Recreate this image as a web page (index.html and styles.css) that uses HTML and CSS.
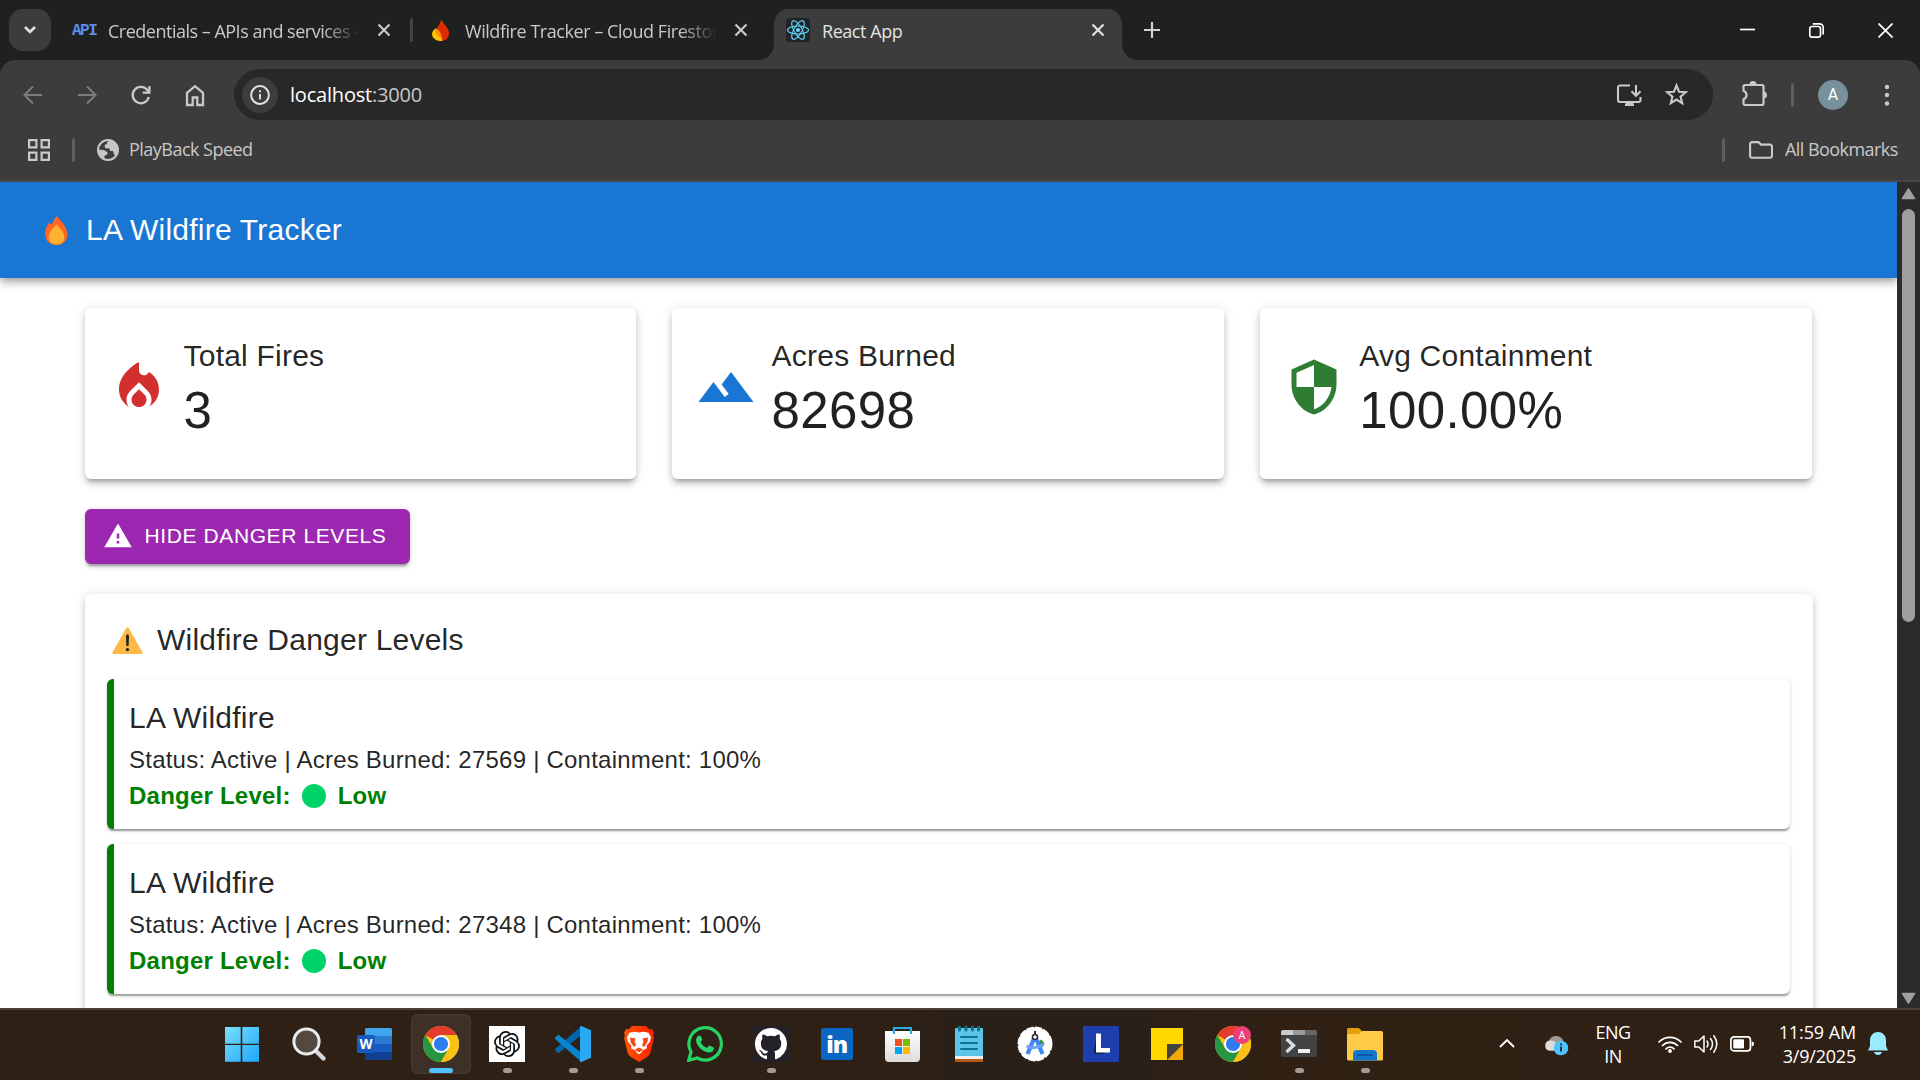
FILE: index.html
```html
<!DOCTYPE html>
<html lang="en">
<head>
<meta charset="utf-8">
<title>React App</title>
<link rel="stylesheet" href="styles.css">
</head>
<body>
<div class="screen">

<header class="tabstrip">
  <button class="tab-search" aria-label="Search tabs"><svg width="14" height="10" viewBox="0 0 14 10"><path d="M2 2l5 5 5-5" fill="none" stroke="#e3e3e3" stroke-width="2.6"/></svg></button>
  <div class="tab tab-first">
    <span class="favicon api">API</span>
    <span class="tab-title t1">Credentials – APIs and services -</span>
    <svg class="close" viewBox="0 0 14 14"><path d="M1.5 1.5l11 11m0-11l-11 11"/></svg>
  </div>
  <i class="tab-sep"></i>
  <div class="tab tab-second">
    <svg class="favicon" viewBox="0 0 24 24"><path d="M12.500 1C13.500 6 20 9 20 15.500c0 4.500-3.500 7.500-7.500 7.500S5.500 20 5.500 15.500C5.500 12 11 7 12.500 1z" fill="#dd2c00"/><path d="M6.500 10.500c4 1.500 6 6 6.600 12.400C7 23.500 3 20 3 16c0-2.500 2-4.500 3.500-5.500z" fill="#ffc400"/><path d="M6.500 10.500c3.600 1.300 5.500 4.600 6.300 9.500C8 19 5.500 15 6.500 10.500z" fill="#ff9100"/></svg>
    <span class="tab-title t2">Wildfire Tracker – Cloud Firestor</span>
    <svg class="close" viewBox="0 0 14 14"><path d="M1.500 1.500l11 11m0-11l-11 11"/></svg>
  </div>
  <div class="tab tab-active">
    <svg class="favicon" viewBox="0 0 24 24"><rect width="24" height="24" rx="3" fill="#20232a"/><g fill="none" stroke="#61dafb" stroke-width="1.100"><ellipse cx="12" cy="12" rx="10.500" ry="4"/><ellipse cx="12" cy="12" rx="10.500" ry="4" transform="rotate(60 12 12)"/><ellipse cx="12" cy="12" rx="10.500" ry="4" transform="rotate(120 12 12)"/></g><circle cx="12" cy="12" r="2" fill="#61dafb"/></svg>
    <span class="tab-title t3">React App</span>
    <svg class="close bright" viewBox="0 0 14 14"><path d="M1.500 1.500l11 11m0-11l-11 11"/></svg>
  </div>
  <svg class="plus" viewBox="0 0 16 16"><path d="M8 0v16M0 8h16" stroke="#d0d0d0" stroke-width="2.200"/></svg>
  <div class="win-controls">
    <svg viewBox="0 0 15 15"><path d="M0 6.500h15" /></svg>
    <svg viewBox="0 0 15 15"><rect x=".8" y="3.500" width="10.700" height="10.700" rx="2.200"/><path d="M3.800 .8h6.700a3.700 3.700 0 0 1 3.700 3.700v7"/></svg>
    <svg viewBox="0 0 15 15"><path d="M.5 .5l14 14m0-14l-14 14"/></svg>
  </div>
</header>

<div class="toolbar">
  <div class="nav-row">
    <svg class="nav" viewBox="0 0 24 24"><g fill="none" stroke="#7d7d7d" stroke-width="2"><path d="M21 12H4.500M12 3.500L3.500 12l8.500 8.500"/></g></svg>
    <svg class="nav" viewBox="0 0 24 24"><g fill="none" stroke="#7d7d7d" stroke-width="2"><path d="M3 12h16.500M12 3.500l8.500 8.500-8.500 8.500"/></g></svg>
    <svg class="nav" viewBox="0 0 24 24"><g fill="none" stroke="#c9c9c9" stroke-width="2.300"><path d="M19.800 14A8.200 8.200 0 1 1 18.500 7.200l1.300 1.800"/><path d="M20.400 3v6.700h-6.700"/></g></svg>
    <svg class="nav" viewBox="0 0 24 24"><path d="M4 9.800l8-6.600 8 6.600V22h-5.700v-7.500H9.700V22H4z" fill="none" stroke="#c9c9c9" stroke-width="2.300"/></svg>
    <div class="omnibox">
      <span class="site-info"><svg viewBox="0 0 20 20"><circle cx="10" cy="10" r="8.900" fill="none" stroke="#e3e3e3" stroke-width="2"/><path d="M10 9v5.500M10 5.300v2" stroke="#e3e3e3" stroke-width="1.900"/></svg></span>
      <span class="url">localhost<em>:3000</em></span>
      <svg class="install" viewBox="0 0 26 24" fill="none" stroke="#c9c9c9" stroke-width="2.100"><path d="M14 2.500H4A2 2 0 0 0 2 4.500v12.500a2 2 0 0 0 2 2h19a2 2 0 0 0 1.500-2v-3M9 22h9"/><path d="M9.500 19v3.500h8V19" fill="#c9c9c9" stroke="none"/><path d="M20 2v10.500M15.500 8.300l4.500 4.500 4.500-4.500"/></svg>
      <svg class="star" viewBox="0 0 24 24"><path d="M12 3.200l2.400 6.100 6.500.5-5 4.200 1.600 6.400-5.500-3.500-5.500 3.500 1.600-6.400-5-4.200 6.500-.5z" fill="none" stroke="#c9c9c9" stroke-width="2"/></svg>
    </div>
    <svg class="ext" viewBox="0 0 26 26"><path d="M4 5h17a1.500 1.500 0 0 1 1.500 1.500v17A1.500 1.500 0 0 1 21 25H4a1.500 1.500 0 0 1-1.500-1.500v-4.200c4-1.500 4-7.100 0-8.600V6.500A1.500 1.500 0 0 1 4 5z" fill="none" stroke="#c9c9c9" stroke-width="2.200"/><path d="M8.500 4.500a3.500 3.500 0 0 1 7 0zM22.500 11.500a3.500 3.500 0 0 1 0 7z" fill="#c9c9c9"/></svg>
    <i class="vsep vsep-nav"></i>
    <span class="avatar">A</span>
    <svg class="dots" viewBox="0 0 6 24"><circle cx="3" cy="4" r="2.200"/><circle cx="3" cy="12" r="2.200"/><circle cx="3" cy="20.500" r="2.200"/></svg>
  </div>
  <div class="bookmarks">
    <svg class="apps" viewBox="0 0 22 22"><g fill="none" stroke="#c9c9c9" stroke-width="2.200"><path d="M1.100 1.100h7.300v7.300H1.100zM13.600 1.100h7.300v7.300h-7.300zM1.100 13.600h7.300v7.300H1.100zM13.600 13.600h7.300v7.300h-7.300z"/></g></svg>
    <i class="vsep vsep-apps"></i>
    <svg class="globe" viewBox="0 0 22 22"><circle cx="11" cy="11" r="10" fill="#3c3c3c" stroke="#c4c7c5" stroke-width="2"/><path d="M13 1.500c-2.500.8-3.500 2-3 3.500L7.500 6l.7 3.200 4.300.3.500 2.500h3l1 3.500 1.800 2C22 13.500 22.500 5.500 13 1.500zM1 10.500l5.500.4 4 2.200-.4 2.600-2.600 1-.3 3.500C3 18.500 1 14.500 1 10.500z" fill="#c4c7c5"/></svg>
    <span class="bm-text">PlayBack Speed</span>
    <i class="vsep vsep-all"></i>
    <svg class="folder" viewBox="0 0 24 18"><path d="M1.100 3V14.800a2 2 0 0 0 2 2H21a2 2 0 0 0 2-2V5.600a2 2 0 0 0-2-2h-9l-2.500-2.500H3.100a2 2 0 0 0-2 2z" fill="none" stroke="#c9c9c9" stroke-width="2.100"/></svg>
    <span class="bm-all">All Bookmarks</span>
  </div>
</div>

<div class="viewport">
  <main class="page">
    <div class="appbar">
      <svg class="emoji" viewBox="0 0 41 34"><path d="M21 3c2 3.500 9.500 8.500 10.300 17.500C31.800 28 27 32 20.500 32S9.200 28 9.200 20.500c0-4.500 1.800-8 4.300-11.300.6 1 1.400 2 2.500 2.800C16.500 8.500 18.500 5.500 21 3z" fill="#ff6723"/><path d="M20.500 11.500c2.500 3 7.800 7 7.800 12.700 0 4.800-3.400 7.300-7.800 7.300s-7.800-2.500-7.800-7.300c0-5.700 5.300-9.700 7.800-12.700z" fill="#ffb02e"/></svg>
      <h1>LA Wildfire Tracker</h1>
    </div>
    <div class="container">
      <section class="stats">
        <article class="card stat">
          <svg class="stat-icon fire" viewBox="0 0 24 24"><path d="m12 12.900-2.130 2.090c-.56.56-.87 1.290-.87 2.070C9 18.680 10.350 20 12 20s3-1.320 3-2.940c0-.78-.31-1.520-.87-2.070z"/><path d="m16 6-.44.55C14.380 8.020 12 7.190 12 5.300V2S4 6 4 13c0 2.920 1.560 5.470 3.890 6.860-.56-.79-.89-1.760-.89-2.800 0-1.320.52-2.560 1.470-3.500L12 10.100l3.530 3.470c.95.93 1.470 2.170 1.470 3.500 0 1.020-.31 1.960-.85 2.750 1.890-1.150 3.290-3.060 3.710-5.300.66-3.550-1.070-6.900-3.860-8.520"/></svg>
          <div><h2>Total Fires</h2><p>3</p></div>
        </article>
        <article class="card stat">
          <svg class="stat-icon land" viewBox="0 0 24 24"><path d="m14 6-3.750 5 2.850 3.800-1.600 1.200C9.810 13.750 7 10 7 10l-6 8h22z"/></svg>
          <div><h2>Acres Burned</h2><p>82698</p></div>
        </article>
        <article class="card stat">
          <svg class="stat-icon shield" viewBox="0 0 24 24"><path d="M12 1 3 5v6c0 5.550 3.840 10.740 9 12 5.160-1.260 9-6.450 9-12V5zm0 10.990h7c-.53 4.120-3.280 7.790-7 8.940V12H5V6.300l7-3.110z"/></svg>
          <div><h2>Avg Containment</h2><p>100.00%</p></div>
        </article>
      </section>
      <button class="hide-btn"><svg viewBox="0 0 24 24"><path d="M1 21h22L12 2zm12-3h-2v-2h2zm0-4h-2v-4h2z"/></svg>Hide Danger Levels</button>
      <section class="card danger">
        <div class="danger-title">
          <svg class="emoji" viewBox="0 0 41 34"><path d="M19 5.500q1.500-2.600 3 0L35.300 29q1 2-1.300 2H7q-2.300 0-1.300-2z" fill="#ffb848"/><path d="M19 13.500q0-2.200 1.500-2.200t1.500 2.200l-.4 9.500h-2.200z" fill="#222"/><circle cx="20.500" cy="26.600" r="1.700" fill="#222"/></svg>
          <h2>Wildfire Danger Levels</h2>
        </div>
        <article class="fire-row">
          <h3>LA Wildfire</h3>
          <p>Status: Active | Acres Burned: 27569 | Containment: 100%</p>
          <p class="level">Danger Level: <i class="circle"></i> Low</p>
        </article>
        <article class="fire-row">
          <h3>LA Wildfire</h3>
          <p>Status: Active | Acres Burned: 27348 | Containment: 100%</p>
          <p class="level">Danger Level: <i class="circle"></i> Low</p>
        </article>
      </section>
    </div>
  </main>
  <div class="scrollbar">
    <svg viewBox="0 0 15 12"><path d="M7.500 1l6 9.500h-12z"/></svg>
    <i class="thumb"></i>
    <svg viewBox="0 0 15 12"><path d="M7.500 11l6-9.500h-12z"/></svg>
  </div>
</div>

<footer class="taskbar">
  <div class="apps-row">
    <span class="app"><svg viewBox="0 0 36 36"><defs><linearGradient id="win" x1="0" y1="0" x2="1" y2="1" gradientUnits="objectBoundingBox"><stop offset="0" stop-color="#7fe0fb"/><stop offset="1" stop-color="#1aa7fb"/></linearGradient></defs><g transform="translate(-1 1)"><path d="M0 0h16.700v16.700H0zM18.300 0H35v16.700H18.300zM0 18H16.700v16.700H0zM18.300 18H35v16.700H18.300z" fill="url(#win)"/></g></svg></span>
    <span class="app"><svg viewBox="0 0 36 36"><path d="M24 24l8.500 8.500" stroke="#d5d9dc" stroke-width="4.400" stroke-linecap="round"/><circle cx="15.500" cy="15.500" r="12.600" fill="#54483f" stroke="#e9ebec" stroke-width="3"/></svg></span>
    <span class="app"><svg viewBox="0 0 36 36"><rect x="8" y="2" width="27" height="32" rx="1.500" fill="#103f91"/><path d="M8 18h27v8H8z" fill="#185abd"/><path d="M8 10h27v8H8z" fill="#2b7cd3"/><path d="M9.500 2h24A1.500 1.500 0 0 1 35 3.500V10H8V3.500A1.500 1.500 0 0 1 9.500 2z" fill="#41a5ee"/><rect x="0" y="9" width="18" height="18" rx="1.500" fill="#185abd"/><text x="9" y="23" text-anchor="middle" font-family="Open Sans, sans-serif" font-weight="700" font-size="13.500" fill="#fff">W</text></svg></span>
    <span class="app active"><svg viewBox="0 0 36 36"><g id="chrome"><circle cx="18" cy="18" r="18" fill="#fbc116"/><path d="M18 18L2.400 9A18 18 0 0 1 33.600 9z" fill="#e33b2e"/><path d="M2.400 9a18 18 0 0 0 15.600 27l7.800-13.500L18 27 10.200 22.500z" fill="#269645"/><path d="M18 9h15.600A18 18 0 0 1 18 36l7.800-13.500z" fill="#fbc116"/><circle cx="18" cy="18" r="9" fill="#fff"/><circle cx="18" cy="18" r="7.100" fill="#2d7cf0"/></g></svg><i></i></span>
    <span class="app"><svg viewBox="0 0 36 36"><rect width="36" height="36" fill="#fff"/><g transform="translate(5 5) scale(1.083)"><path d="M22.2819 9.8211a5.9847 5.9847 0 0 0-.5157-4.9108 6.0462 6.0462 0 0 0-6.5098-2.900A6.0651 6.0651 0 0 0 4.9807 4.1818a5.9847 5.9847 0 0 0-3.9977 2.900 6.0462 6.0462 0 0 0 .7427 7.0966 5.980 5.980 0 0 0 .511 4.9107 6.051 6.051 0 0 0 6.5146 2.9001A5.9847 5.9847 0 0 0 13.2599 24a6.0557 6.0557 0 0 0 5.7718-4.2058 5.9894 5.9894 0 0 0 3.9977-2.9001 6.0557 6.0557 0 0 0-.7475-7.0729zm-9.022 12.6081a4.4755 4.4755 0 0 1-2.8764-1.0408l.1419-.0804 4.7783-2.7582a.7948.7948 0 0 0 .3927-.6813v-6.7369l2.020 1.1686a.071.071 0 0 1 .038.052v5.5826a4.504 4.504 0 0 1-4.4945 4.4944zm-9.6607-4.1254a4.4708 4.4708 0 0 1-.5346-3.0137l.142.0852 4.783 2.7582a.7712.7712 0 0 0 .7806 0l5.8428-3.3685v2.3324a.0804.0804 0 0 1-.0332.0615L9.740 19.9502a4.4992 4.4992 0 0 1-6.1408-1.6464zM2.3408 7.8956a4.485 4.485 0 0 1 2.3655-1.9728V11.600a.7664.7664 0 0 0 .3879.6765l5.8144 3.3543-2.0201 1.1685a.0757.0757 0 0 1-.071 0l-4.8303-2.7865A4.504 4.504 0 0 1 2.3408 7.872zm16.5963 3.8558L13.1038 8.364 15.1192 7.200a.0757.0757 0 0 1 .071 0l4.8303 2.7913a4.4944 4.4944 0 0 1-.6765 8.1042v-5.6772a.790.790 0 0 0-.407-.667zm2.0107-3.0231l-.142-.0852-4.7735-2.7818a.7759.7759 0 0 0-.7854 0L9.409 9.2297V6.8974a.0662.0662 0 0 1 .0284-.0615l4.8303-2.7866a4.4992 4.4992 0 0 1 6.6802 4.660zM8.3065 12.863l-2.020-1.1638a.0804.0804 0 0 1-.038-.0567V6.0742a4.4992 4.4992 0 0 1 7.3757-3.4537l-.142.0805L8.704 5.459a.7948.7948 0 0 0-.3927.6813zm1.0976-2.3654l2.602-1.4998 2.6069 1.4998v2.9994l-2.5974 1.4997-2.6067-1.4997Z" fill="#111"/></g></svg><i></i></span>
    <span class="app"><svg viewBox="0 0 36 36"><path d="M26.500 0v9L4.500 26.500a1.700 1.700 0 0 1-2.200 0L.6 25a1.700 1.700 0 0 1 0-2.500z" fill="#0065a9"/><path d="M26.500 36v-9L4.500 9.500a1.700 1.700 0 0 0-2.200 0L.6 11a1.700 1.700 0 0 0 0 2.500z" fill="#0a85cf"/><path d="M26.500 0L36 4.200v27.600L26.500 36c-.8 0-1.500-.5-1.500-1.300V1.300C25 .5 25.700 0 26.500 0z" fill="#2aa8f2"/></svg><i></i></span>
    <span class="app"><svg viewBox="0 0 36 36"><defs><linearGradient id="brv" x1="0" x2="1" y1="0" y2="0"><stop offset="0" stop-color="#ff5500"/><stop offset="1" stop-color="#ff1f00"/></linearGradient></defs><path d="M11 0h14l3.500 3.500 2.500-.5 2 4-1 2.500 1 2.500-3.500 14c-.7 2.600-1.500 3.500-3.500 5L18 36l-8-5c-2-1.500-2.800-2.400-3.500-5L3 12l1-2.500L3 7l2-4 2.500.5z" fill="url(#brv)"/><path d="M18 6.500l4.500-.8 5 1 2.500 4.500-1 4.500-3.500 4 .5 2.500-4 2-1.500 1 .5 1-3 2-3-2 .5-1-1.500-1-4-2 .5-2.500-3.500-4-1-4.500 2.500-4.500 5-1z" fill="#fff"/><path d="M9 11.500l5.500 1-1 3 1.500 4-2 1.500-3.500-5zM27 11.500l-5.500 1 1 3-1.500 4 2 1.500 3.500-5zM14 23.500l4-2 4 2-4 3z" fill="#fb4210"/></svg><i></i></span>
    <span class="app"><svg viewBox="0 0 36 36"><path d="M1.800 34.200l2.200-8.400a16.200 16.200 0 1 1 6.200 6.200z" fill="none" stroke="#25d366" stroke-width="3.200"/><path d="M12 9.500c.8-.3 1.500 0 1.800.7l1.300 3c.2.600 0 1-.4 1.500l-1.200 1.400c1.500 3 3.800 4.800 6.500 6l1.600-2c.4-.5.8-.6 1.400-.3l3.200 1.500c.6.3.9.700.7 1.400-.5 2.800-3 4-5 3.800C15 26 9.500 19.500 9 14.500c-.1-2 1.200-4.300 3-5z" fill="#25d366"/></svg></span>
    <span class="app"><svg viewBox="0 0 36 36"><rect width="36" height="36" fill="#24212a"/><g transform="translate(2 2)"><path transform="scale(2)" d="M8 0C3.580 0 0 3.580 0 8c0 3.540 2.290 6.530 5.470 7.590.4.070.55-.17.55-.38 0-.19-.01-.82-.01-1.490-2.010.37-2.530-.49-2.690-.94-.09-.23-.48-.94-.82-1.130-.28-.15-.68-.52-.01-.53.63-.01 1.080.58 1.230.82.72 1.210 1.870.87 2.330.66.070-.52.280-.87.510-1.070-1.780-.2-3.640-.89-3.640-3.950 0-.87.31-1.590.82-2.150-.08-.2-.36-1.020.08-2.120 0 0 .67-.21 2.200.82.64-.18 1.320-.27 2-.27s1.360.09 2 .27c1.530-1.040 2.200-.82 2.200-.82.44 1.100.16 1.920.08 2.120.51.56.82 1.270.82 2.150 0 3.070-1.870 3.750-3.650 3.950.29.250.54.730.54 1.480 0 1.070-.01 1.930-.01 2.200 0 .210.150.460.550.380A8.010 8.010 0 0 0 16 8c0-4.420-3.580-8-8-8z" fill="#fff"/></g></svg><i></i></span>
    <span class="app"><svg viewBox="0 0 36 36"><rect x="2" y="2" width="32" height="32" rx="2.500" fill="#0a66c2"/><text x="17.800" y="27" text-anchor="middle" font-family="Open Sans, sans-serif" font-weight="800" font-size="23" letter-spacing="-.8" fill="#fff">in</text></svg></span>
    <span class="app"><svg viewBox="0 0 36 36"><defs><linearGradient id="bag" x1="0" x2="0" y1="0" y2="1"><stop offset="0" stop-color="#fff"/><stop offset="1" stop-color="#dcdcdc"/></linearGradient></defs><path d="M0 5h35v27a4 4 0 0 1-4 4h-27a4 4 0 0 1-4-4z" fill="url(#bag)"/><path d="M9 8V2h17v6" fill="none" stroke="#27aee5" stroke-width="2.200"/><path d="M10 13h7v7h-7z" fill="#f25022"/><path d="M18 13h7v7h-7z" fill="#7fba00"/><path d="M10 21h7v7h-7z" fill="#00a4ef"/><path d="M18 21h7v7h-7z" fill="#ffb900"/></svg></span>
    <span class="app"><svg viewBox="0 0 36 36"><path d="M4 30h28v6H4z" fill="#b85a12"/><path d="M4 30h28v3H4z" fill="#eee"/><path d="M5 2h26a1 1 0 0 1 1 1v27H4V3a1 1 0 0 1 1-1z" fill="#5cc4e4"/><g stroke="#0a7396" stroke-linecap="round" stroke-width="2"><path d="M10 11h16M10 17h16M10 23h16"/><path d="M8.500 1v3M15 1v3M21.500 1v3M27.500 1v3" stroke-width="3"/></g></svg></span>
    <span class="app"><svg viewBox="0 0 36 36"><circle cx="18" cy="18" r="16.300" fill="#fff" stroke="#fff" stroke-width="2.400" stroke-dasharray="5.700 2.850" stroke-linecap="round"/><path d="M22 15l2.500-1.500 3 4-2.500 4h-3z" fill="#2e9d45"/><path d="M18 10l-7.500 18M18 10l7.500 18" stroke="#4285f4" stroke-width="4.200"/><path d="M9.500 20q8.500 4 17-1.500" fill="none" stroke="#6ea1f8" stroke-width="3"/><path d="M18 5v4" stroke="#333" stroke-width="2"/><circle cx="18" cy="11" r="2.500" fill="#fff" stroke="#333" stroke-width="1.600"/></svg></span>
    <span class="app"><svg viewBox="0 0 36 36"><rect width="36" height="36" fill="#1e40af"/><path d="M13.500 7.500L10.500 28h11l-4-6z" fill="#0a2a4c"/><path d="M13 7.500h5v14.500h9v4.500H13z" fill="#fff"/></svg></span>
    <span class="app"><svg viewBox="0 0 36 36"><path d="M2 2h32v16L18 34H2z" fill="#ffd800"/><path d="M34 18v16H18z" fill="#f0a808"/><path d="M18 18h16L18 34z" fill="#45423c"/></svg></span>
    <span class="app"><svg viewBox="0 0 36 36"><use href="#chrome"/><circle cx="27" cy="9" r="9" fill="#ec407a"/><text x="27" y="12.800" text-anchor="middle" font-family="Roboto, sans-serif" font-size="10.500" fill="#fff">A</text></svg></span>
    <span class="app"><svg viewBox="0 0 36 36"><path d="M0 9h36v20a2 2 0 0 1-2 2H2a2 2 0 0 1-2-2z" fill="#424242"/><path d="M0 9V6a2 2 0 0 1 2-2h10v5z" fill="#ccc"/><path d="M12 4h12v5H12z" fill="#999"/><path d="M24 4h10a2 2 0 0 1 2 2v3H24z" fill="#666"/><path d="M5.500 13l7 6.500-7 6.500" fill="none" stroke="#d9d9d9" stroke-width="3.400"/><path d="M17 23h12v4H17z" fill="#f0f0f0"/></svg><i></i></span>
    <span class="app"><svg viewBox="0 0 36 36"><path d="M0 3.500A1.500 1.500 0 0 1 1.500 2H11q1.500 0 2.500 1.500l2 3V12H0z" fill="#e2a00d"/><path d="M0 8h11q1.500 0 2.500-1.500L15 5h19.500A1.500 1.500 0 0 1 36 6.500V33a1.500 1.500 0 0 1-1.500 1.500h-33A1.500 1.500 0 0 1 0 33z" fill="#ffcb46"/><path d="M6 34.500V28a4 4 0 0 1 4-4h16a4 4 0 0 1 4 4v6.500z" fill="#1278cc"/><path d="M11 29h14" stroke="#0b4d94" stroke-width="1.600" stroke-linecap="round"/></svg><i></i></span>
  </div>
  <div class="tray">
    <svg class="chev" viewBox="0 0 16 10"><path d="M1 9l7-7 7 7" fill="none" stroke="#fff" stroke-width="1.900"/></svg>
    <svg class="cloud" viewBox="0 0 26 22"><path d="M6 16.500a5.500 5.500 0 0 1 0-10A8 8 0 0 1 20 6l1 10.500z" fill="#9d9894"/><path d="M5.500 16.500a5.200 5.200 0 0 1 1.500-10c4-.5 8 2 9 10z" fill="#dedbd9"/><circle cx="18" cy="14" r="7.300" fill="#4cc2ff"/><path d="M18 12.500v5M18 9.500v1.800" stroke="#1c2a33" stroke-width="1.900"/></svg>
    <span class="lang">ENG<br>IN</span>
    <svg class="wifi" viewBox="0 0 24 18"><g fill="none" stroke="#fff" stroke-width="1.700" stroke-linecap="round"><path d="M1 7a15.500 15.500 0 0 1 22 0M4.500 10.500a10.600 10.600 0 0 1 15 0M8 13.800a5.700 5.700 0 0 1 8 0"/></g><circle cx="12" cy="16" r="1.900" fill="#fff"/></svg>
    <svg class="vol" viewBox="0 0 24 20"><g fill="none" stroke="#fff" stroke-width="1.500" stroke-linejoin="round" stroke-linecap="round"><path d="M.8 7h4L10 2v16l-5.200-5h-4zM13 7q2 3 0 6M16.500 4.500q4 5.500 0 11M19.800 1.800q6 8.200 0 16.400"/></g></svg>
    <svg class="batt" viewBox="0 0 24 16"><rect x=".9" y=".9" width="19.500" height="14" rx="3" fill="none" stroke="#fff" stroke-width="1.700"/><rect x="3.300" y="3.300" width="10.700" height="9.200" rx="1" fill="#fff"/><path d="M21.700 5.500q2.500.2 2.300 2.500t-2.300 2.500z" fill="#fff"/></svg>
    <span class="clock"><span>11:59 AM</span><br>3/9/2025</span>
    <svg class="bell" viewBox="0 0 20 24"><path d="M10 0a8 8 0 0 1 8 8v6l2 4.500H0L2 14V8a8 8 0 0 1 8-8zM6 20h8q-1 3-4 3t-4-3z" fill="#99ebff"/></svg>
  </div>
</footer>
</div>
</body>
</html>
```
FILE: styles.css
```css
* { box-sizing: border-box; margin: 0; padding: 0; }
body { width: 1920px; height: 1080px; overflow: hidden; background: #1f2120; }
svg { display: block; flex: none; }
button { border: 0; font: inherit; }
.screen { display: flex; flex-direction: column; width: 1920px; height: 1080px; }

/* Browser tab strip */
.tabstrip { display: flex; align-items: center; height: 60px; flex: none; background: #1f2120; font: 18px "Open Sans", "Noto Sans", sans-serif; }
.tab-search { display: flex; align-items: center; justify-content: center; width: 42px; height: 42px; margin-left: 9px; border-radius: 14px; background: #3c3c3c; }
.tab { display: flex; align-items: center; height: 51px; flex: none; }
.tab-first { width: 360px; padding-left: 21px; }
.tab-second { width: 361px; padding-left: 16px; }
.tab-active { position: relative; width: 348px; height: 51px; align-self: flex-end; padding: 0 0 9px 12px; border-radius: 15px 15px 0 0; background: #3c3c3c; }
.tab-active::before, .tab-active::after { content: ""; position: absolute; bottom: 0; width: 15px; height: 15px; }
.tab-active::before { left: -15px; background: radial-gradient(circle at 0 0, transparent 14.5px, #3c3c3c 15px); }
.tab-active::after { right: -15px; background: radial-gradient(circle at 100% 0, transparent 14.5px, #3c3c3c 15px); }
.favicon { width: 24px; height: 24px; flex: none; }
.api { display: flex; align-items: center; padding-top: 1px; font: 700 16px "Liberation Mono", monospace; letter-spacing: -1.5px; color: #5b8def; }
.tab-title { height: 26px; margin-left: 12px; line-height: 28px; white-space: nowrap; color: #c9c9c9; letter-spacing: -.45px; }
.t1, .t2 { width: 252px; -webkit-mask-image: linear-gradient(90deg, #000 85%, transparent); mask-image: linear-gradient(90deg, #000 85%, transparent); }
.t1 { letter-spacing: -.5px; }
.t3 { width: 252px; color: #e3e3e3; }
.close { width: 14px; height: 14px; margin-left: 17px; fill: none; stroke: #c9c9c9; stroke-width: 2.2; }
.close.bright { margin-left: 17px; stroke: #e3e3e3; }
.tab-sep { width: 3px; height: 24px; margin-left: -1px; border-radius: 2px; background: #444; }
.plus { width: 16px; height: 16px; margin-left: 22px; }
.win-controls { display: flex; gap: 54px; margin-left: auto; margin-right: 27px; }
.win-controls svg { width: 15px; height: 15px; fill: none; stroke: #fff; stroke-width: 1.7; }

/* Browser toolbar */
.toolbar { height: 122px; flex: none; border-bottom: 2px solid #474747; border-radius: 15px 15px 0 0; background: #3c3c3c; font: 18px "Open Sans", "Noto Sans", sans-serif; color: #c9c9c9; }
.nav-row { display: flex; align-items: center; height: 69px; padding-left: 21px; }
.nav { width: 24px; height: 24px; margin-right: 30px; }
.nav:nth-child(4) { margin-right: 27px; }
.omnibox { display: flex; align-items: center; width: 1479px; height: 51px; flex: none; border-radius: 26px; background: #282828; padding-left: 8px; }
.site-info { display: flex; align-items: center; justify-content: center; width: 36px; height: 36px; border-radius: 50%; background: #3c3c3c; }
.site-info svg { width: 20px; height: 20px; }
.url { width: 1326px; margin-left: 12px; font-size: 20px; letter-spacing: -.2px; line-height: 30px; color: #fff; }
.url em { font-style: normal; color: #c9c9c9; }
.install { width: 26px; height: 24px; }
.star { width: 25px; height: 25px; margin-left: 22px; }
.ext { width: 26px; height: 26px; margin: -3px 0 0 28px; }
.vsep { width: 3px; height: 24px; flex: none; border-radius: 2px; background: #5e5e5e; }
.vsep-nav { margin-left: 24px; }
.avatar { display: flex; align-items: center; justify-content: center; width: 30px; height: 30px; margin-left: 24px; border-radius: 50%; background: #78909c; color: #fff; font: 16px Roboto, sans-serif; }
.dots { width: 6px; height: 24px; margin-left: 36px; fill: #c9c9c9; }
.bookmarks { display: flex; align-items: center; height: 42px; padding: 0 22px 0 28px; }
.apps { width: 22px; height: 22px; }
.vsep-apps { margin-left: 22px; }
.globe { width: 22px; height: 22px; margin-left: 22px; }
.bm-text { margin-left: 10px; padding-bottom: 1.5px; letter-spacing: -.52px; }
.vsep-all { margin-left: auto; }
.folder { width: 24px; height: 18px; margin-left: 24px; }
.bm-all { margin-left: 12px; padding-bottom: 1.5px; width: 113px; white-space: nowrap; letter-spacing: -.55px; }

/* Web page */
.viewport { display: flex; height: 826px; flex: none; }
.page { width: 1897px; overflow: hidden; background: #fff; font-family: "Liberation Sans", Arial, sans-serif; color: rgba(0, 0, 0, .87); }
h1, h2, h3 { font-size: 30px; font-weight: 400; line-height: 48px; letter-spacing: .225px; }
.emoji { width: 41px; height: 34px; margin-right: 9px; }
.appbar { position: relative; display: flex; align-items: center; height: 96px; padding: 0 0 1px 36px; background: #1976d2; color: #fff; box-shadow: 0 3px 6px -1.5px rgba(0,0,0,.2), 0 6px 7.5px rgba(0,0,0,.14), 0 1.5px 15px rgba(0,0,0,.12); }
.container { padding: 30px 84.5px 0; }
.card { border-radius: 6px; background: #fff; box-shadow: 0 4.5px 4.5px -3px rgba(0,0,0,.2), 0 4.5px 6px rgba(0,0,0,.14), 0 1.5px 12px rgba(0,0,0,.12); }
.stats { display: grid; grid-template-columns: repeat(3, 1fr); gap: 36px; width: 1727px; }
.stat { display: flex; align-items: center; padding: 23px 24px 38px; }
.stat h2 { line-height: 49px; }
.stat-icon { width: 60px; height: 60px; margin: 1px 15.4px 0 0; }
.stat-icon.fire { margin-right: 15px; fill: #d32f2f; }
.land { fill: #1976d2; }
.shield { fill: #2e7d32; }
.stat p { font-size: 51px; line-height: 61px; letter-spacing: .375px; }
.hide-btn { display: flex; align-items: center; height: 55px; margin-top: 30px; padding: 0 24px 2px 18px; border-radius: 6px; background: #9c27b0; color: #fff; font: 500 21px "Liberation Sans", Arial, sans-serif; letter-spacing: .6px; text-transform: uppercase; box-shadow: 0 4.5px 1.5px -3px rgba(0,0,0,.2), 0 3px 3px rgba(0,0,0,.14), 0 1.5px 7.5px rgba(0,0,0,.12); }
.hide-btn svg { width: 30px; height: 30px; margin-right: 12px; fill: #fff; }
.danger { height: 600px; margin-top: 30px; padding: 21.5px 22.5px; }
.danger-title { display: flex; align-items: center; }
.fire-row { height: 150px; margin-top: 15px; padding: 15px; border-left: 7px solid green; border-radius: 6px; background: #fff; box-shadow: 0 3px 1.5px -1.5px rgba(0,0,0,.2), 0 1.5px 1.5px rgba(0,0,0,.14), 0 1.5px 4.5px rgba(0,0,0,.12); }
.fire-row p { font-size: 24px; line-height: 36px; letter-spacing: .225px; }
.fire-row .level { display: flex; align-items: center; gap: 11.5px; color: green; font-weight: 700; }
.circle { width: 24px; height: 24px; border-radius: 50%; background: #00d26a; }
.scrollbar { display: flex; flex-direction: column; align-items: center; width: 23px; padding: 6px 0 4px; background: #2b2b2b; }
.scrollbar svg { width: 15px; height: 12px; fill: #9f9f9f; stroke: #9f9f9f; stroke-width: 1.5; stroke-linejoin: round; }
.thumb { width: 13px; height: 413px; margin: 9px 0 auto; border-radius: 7px; background: #9f9f9f; }

/* Desktop taskbar */
.taskbar { display: flex; height: 72px; flex: none; border-top: 2px solid #4c4138; background: linear-gradient(90deg, #2f2015 0, #2f2015 45%, #292019 52%, #292019 57%, #302014 66%, #2f2015); color: #fff; font: 18px/24px "Open Sans", "Noto Sans", sans-serif; }
.apps-row { display: flex; align-items: center; padding: 0 0 4px 213px; gap: 6px; }
.app { position: relative; display: flex; align-items: center; justify-content: center; width: 60px; height: 60px; margin-top: 2px; border-radius: 7px; }
.app svg { width: 36px; height: 36px; }
.app.active { background: #3d3027; box-shadow: inset 0 0 0 1.500px #46392f; }
.app i { position: absolute; left: 26px; bottom: 1px; width: 9px; height: 5px; border-radius: 3px; background: #a19a95; }
.app.active i { left: 18px; width: 24px; background: #4cc2ff; }
.tray { display: flex; align-items: center; margin-left: auto; padding: 0 32px 2px 0; }
.chev { width: 16px; height: 10px; margin: -2px 28px 0 0; }
.cloud { width: 26px; height: 22px; margin: 2px 25px 0 0; }
.lang { width: 38px; margin-right: 26px; text-align: center; letter-spacing: -.5px; }
.wifi { width: 24px; height: 18px; margin-right: 12px; }
.vol { width: 24px; height: 20px; margin-right: 12px; }
.batt { width: 24px; height: 16px; margin-right: 24px; }
.clock { width: 78px; text-align: right; white-space: nowrap; letter-spacing: -.2px; }
.clock span { letter-spacing: -.1px; }
.bell { width: 20px; height: 24px; margin-left: 12px; }
```
